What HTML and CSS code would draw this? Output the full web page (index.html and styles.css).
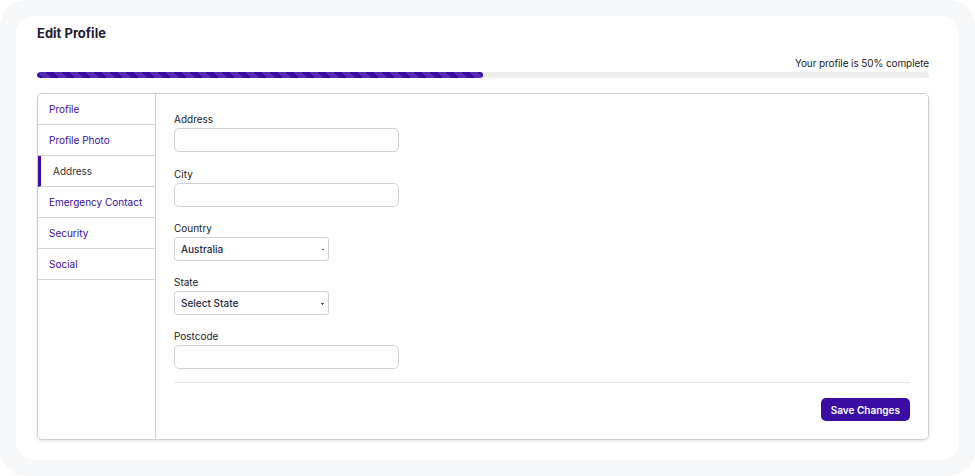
FILE: index.html
```html
<!DOCTYPE html>
<html lang="en">
<head>
    <meta charset="UTF-8">
    <meta name="viewport" content="width=device-width, initial-scale=1.0">
    <title>Edit Profile</title>
    <link rel="stylesheet" href="styles.css">
</head>

<body>
    <div class="page">
        <div class="card">
            <h2 class="card-title">Edit Profile</h2>

            <!-- Progress -->
            <div class="progress-label">Your profile is 50% complete</div>
            <div class="progress">
                <div class="progress-fill" style="width: 50%"></div>
            </div>

            <!-- Tabs -->
            <div class="tabs">
                <ul class="tab-nav">
                    <li><a href="#">Profile</a></li>
                    <li><a href="#">Profile Photo</a></li>
                    <li class="active"><a href="#">Address</a></li>
                    <li><a href="#">Emergency Contact</a></li>
                    <li><a href="#">Security</a></li>
                    <li><a href="#">Social</a></li>
                </ul>

                <form class="tab-body">
                    <div class="field">
                        <label>Address</label>
                        <input type="text" class="input">
                    </div>
                    <div class="field">
                        <label>City</label>
                        <input type="text" class="input">
                    </div>
                    <div class="field">
                        <label>Country</label>
                        <select class="select">
                            <option>Australia</option>
                        </select>
                    </div>
                    <div class="field">
                        <label>State</label>
                        <select class="select">
                            <option>Select State</option>
                        </select>
                    </div>
                    <div class="field">
                        <label>Postcode</label>
                        <input type="text" class="input">
                    </div>

                    <div class="form-footer">
                        <button type="submit" class="btn">Save Changes</button>
                    </div>
                </form>
            </div>
        </div>
    </div>
</body>
</html>
```

FILE: styles.css
```css
body {
    font-family: Inter, "Liberation Sans", Arial, sans-serif;
    margin: 0;
    padding: 0;
    background: #fff;
    color: #222;
}

.page {
    background: #f6f7f9;
    border-radius: 26px;
    padding: 16px;
    height: 476px;
    box-sizing: border-box;
    width: 975px;
}

.card {
    background: #fff;
    border-radius: 18px;
    width: 943px;
    height: 444px;
    box-sizing: border-box;
    padding: 10px 30px 0 21px;
}

.card-title {
    margin: 0;
    font-size: 13px;
    font-weight: 700;
    color: #1f1d2e;
    line-height: 14px;
}

.progress-label {
    margin-top: 17px;
    text-align: right;
    font-size: 10px;
    letter-spacing: -0.1px;
    color: #222;
    line-height: 12px;
}

.progress {
    margin-top: 3px;
    height: 6px;
    background: #eeeeee;
    border-radius: 3px;
    overflow: hidden;
}

.progress-fill {
    height: 100%;
    border-radius: 3px;
    background-color: #3a0ca3;
    background-image: linear-gradient(45deg,
        rgba(255, 255, 255, 0.15) 25%, transparent 25%,
        transparent 50%, rgba(255, 255, 255, 0.15) 50%,
        rgba(255, 255, 255, 0.15) 75%, transparent 75%, transparent);
    background-size: 16px 16px;
}

/* Tabs box */
.tabs {
    margin-top: 15px;
    display: flex;
    height: 347px;
    border: 1px solid #cfcfd4;
    border-radius: 5px;
    box-shadow: 0 1px 3px rgba(0, 0, 0, 0.12);
    box-sizing: border-box;
}

.tab-nav {
    list-style: none;
    margin: 0;
    padding: 0;
    width: 118px;
    box-sizing: border-box;
    flex-shrink: 0;
    border-right: 1px solid #cfcfd4;
}

.tab-nav li {
    height: 31px;
    border-bottom: 1px solid #d4d4d8;
    box-sizing: border-box;
    display: flex;
    align-items: center;
    padding-left: 11px;
}

.tab-nav a {
    font-size: 10px;
    color: #3a0ca3;
    text-decoration: none;
}

.tab-nav li.active {
    border-left: 3px solid #3a0ca3;
    padding-left: 12px;
}

.tab-nav li.active a {
    color: #333;
}

.tab-body {
    flex: 1;
    padding: 19px 18px 0 18px;
}

.field {
    margin-bottom: 15px;
}

.field:first-child {
    margin-bottom: 16px;
}

.field label {
    display: block;
    font-size: 10px;
    color: #222;
    line-height: 12px;
    margin-bottom: 3px;
}

.input {
    display: block;
    width: 225px;
    height: 24px;
    box-sizing: border-box;
    border: 1px solid #cfd2d8;
    border-radius: 5px;
    padding: 0 8px;
    font-size: 10px;
}

.select {
    display: block;
    width: 155px;
    height: 24px;
    box-sizing: border-box;
    border: 1px solid #cfd2d8;
    border-radius: 3px;
    padding: 0 6px;
    font-family: inherit;
    font-size: 10px;
    font-weight: 500;
    color: #1d2b3a;
    background: #fff;
    -webkit-appearance: none;
    appearance: none;
    background-image: linear-gradient(45deg, transparent 50%, #555 50%),
        linear-gradient(135deg, #555 50%, transparent 50%);
    background-position: 146px 11px, 148px 11px;
    background-size: 2px 2px, 2px 2px;
    background-repeat: no-repeat;
}

.form-footer {
    margin-top: -2px;
    border-top: 1px solid #e4e4e7;
    padding-top: 15px;
    display: flex;
    justify-content: flex-end;
}

.btn {
    background-color: #3a0ca3;
    color: #fff;
    border: none;
    border-radius: 5px;
    height: 23px;
    padding: 0 10px;
    font-family: inherit;
    font-size: 10px;
    font-weight: 600;
    cursor: pointer;
}
```
